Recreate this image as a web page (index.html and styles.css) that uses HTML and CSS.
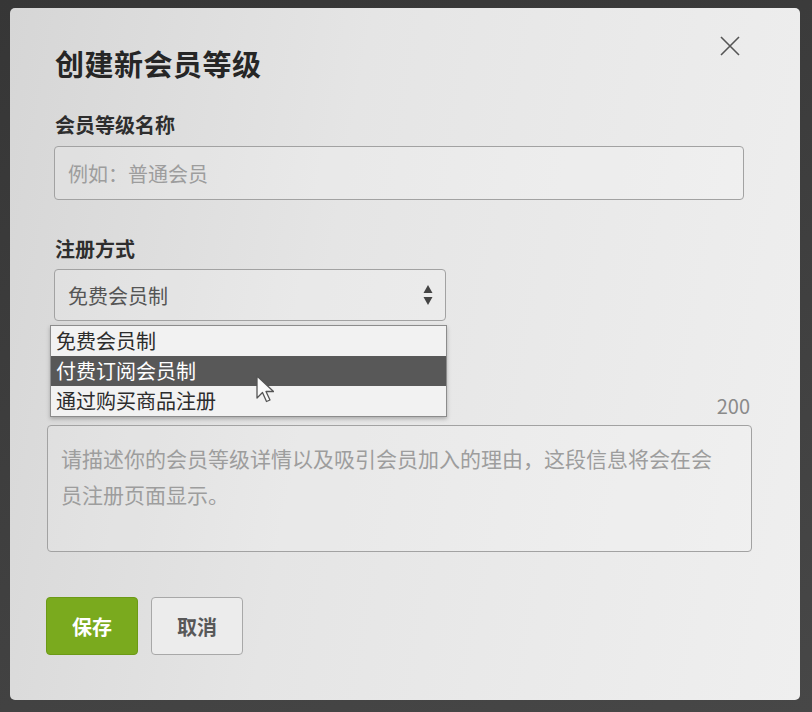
FILE: index.html
```html
<!DOCTYPE html>
<html lang="zh-CN">
<head>
    <meta charset="UTF-8">
    <meta name="viewport" content="width=device-width, initial-scale=1.0">
    <title>创建新会员等级</title>
    <link rel="stylesheet" href="styles.css">
</head>
<body>
    <div class="modal">
        <span class="close" title="关闭">
            <svg width="20" height="20" viewBox="0 0 20 20"><path d="M1 1L19 19M19 1L1 19" stroke="#555" stroke-width="1.6" fill="none"/></svg>
        </span>
        <h1 class="title">创建新会员等级</h1>

        <label class="label">会员等级名称</label>
        <input type="text" class="field" placeholder="例如：普通会员">

        <label class="label label_2">注册方式</label>
        <div class="select_wrap">
            <div class="select">
                <span>免费会员制</span>
                <svg class="arrows" width="10" height="22" viewBox="0 0 10 22"><path d="M5 1L9.5 9H0.5Z M5 21L9.5 13H0.5Z" fill="#444"/></svg>
            </div>
            <ul class="options">
                <li>免费会员制</li>
                <li class="active">付费订阅会员制</li>
                <li>通过购买商品注册</li>
            </ul>
            <svg class="cursor" width="18" height="28" viewBox="0 0 18 28"><path d="M1 1V23L6.5 17.5L10.5 26.5L14 25L10 16.5H17.5Z" fill="#fafafa" stroke="#555" stroke-width="1.3" stroke-linejoin="round"/></svg>
        </div>

        <!-- label sits under the open dropdown -->
        <div class="row">
            <label class="label hidden">会员等级介绍</label>
            <span class="count">200</span>
        </div>
        <textarea class="area" placeholder="请描述你的会员等级详情以及吸引会员加入的理由，这段信息将会在会员注册页面显示。"></textarea>

        <div class="buttons">
            <button type="button" class="btn save">保存</button>
            <button type="button" class="btn cancel">取消</button>
        </div>
    </div>
</body>
</html>
```

FILE: styles.css
```css
*{margin:0;padding:0;box-sizing:border-box;}
body{background:linear-gradient(160deg,#363636,#474747);height:712px;overflow:hidden;font-family:"Noto Sans CJK SC","Liberation Sans",sans-serif;}
.modal{position:relative;margin:8px 12px 0 10px;height:692px;border-radius:5px;padding:37px 52px 0 44px;display:flex;flex-direction:column;background:linear-gradient(100deg,#d6d6d6 0%,#e5e5e5 40%,#efefef 100%);}
.close{position:absolute;top:28px;right:60px;display:block;width:20px;height:20px;}
.title{font-size:29px;line-height:36px;font-weight:700;color:#262626;margin-left:1px;letter-spacing:.5px;}
.label{display:block;font-size:20px;line-height:26px;font-weight:700;color:#2e2e2e;margin-top:31px;margin-left:1px;}
.label_2{margin-top:36px;}
.hidden{visibility:hidden;}
.field{margin-top:8px;height:54px;width:690px;border:1px solid #a2a2a2;border-radius:4px;background:rgba(255,255,255,.18);padding:0 13px;font-family:inherit;font-size:20px;color:#555;outline:none;}
.field::placeholder{color:#9d9d9d;}
.select_wrap{position:relative;margin-top:7px;width:392px;}
.select{height:52px;border:1px solid #a2a2a2;border-radius:4px;background:rgba(255,255,255,.18);display:flex;align-items:center;justify-content:space-between;padding:0 12px 0 13px;font-size:20px;color:#555;}
.options{position:absolute;top:56px;left:-4px;width:397px;list-style:none;background:#f2f2f2;border:1px solid #8c8c8c;box-shadow:0 2px 4px rgba(0,0,0,.25);}
.options li{height:30px;line-height:30px;padding-left:5px;font-size:20px;color:#2c2c2c;}
.options li.active{background:#585858;color:#fff;}
.cursor{position:absolute;top:106px;left:202px;}
.row{display:flex;justify-content:space-between;align-items:center;margin-top:72px;}
.row .label{margin-top:0;}
.count{font-size:20px;line-height:26px;color:#8a8a8a;margin-right:-2px;}
.area{margin-top:6px;margin-left:-7px;width:705px;height:127px;border:1px solid #a2a2a2;border-radius:4px;background:rgba(255,255,255,.15);padding:14px 28px 0 13px;font-family:inherit;font-size:21px;line-height:36px;color:#555;resize:none;overflow:hidden;outline:none;}
.area::placeholder{color:#9d9d9d;}
.buttons{display:flex;gap:13px;margin-top:45px;margin-left:-8px;}
.btn{width:92px;height:58px;border-radius:4px;font-family:inherit;font-size:20px;font-weight:700;cursor:pointer;}
.save{background:#7aaa1e;border:1px solid #6c9a16;color:#fff;}
.cancel{background:#ececec;border:1px solid #a8a8a8;color:#585858;}
```
